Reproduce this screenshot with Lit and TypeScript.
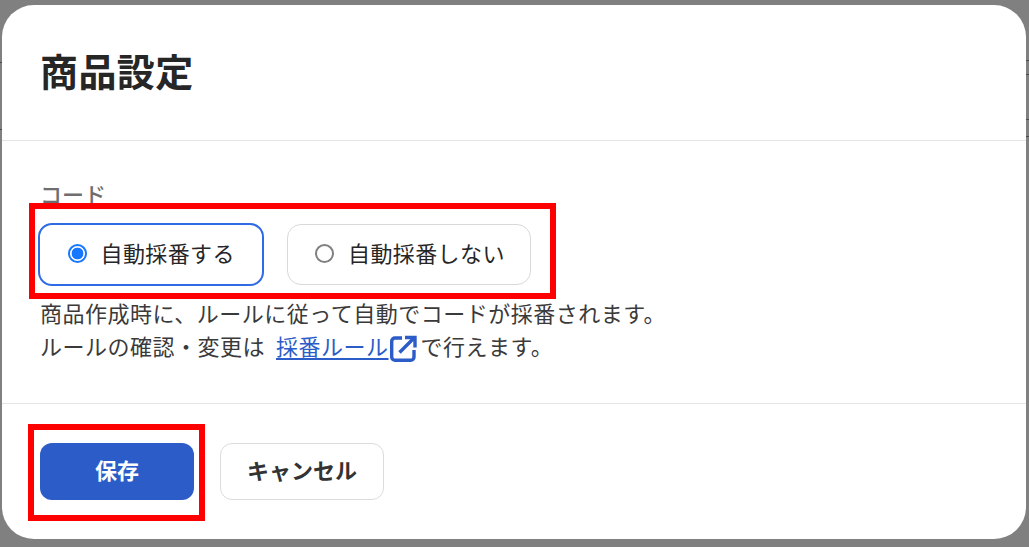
import { LitElement, html, css } from "lit";
import { customElement } from "lit/decorators.js";

@customElement("app-root")
export class AppRoot extends LitElement {
  static styles = css`
    :host {
      display: block;
      width: 1029px;
      height: 547px;
      position: relative;
      overflow: hidden;
      background: #808080;
      font-family: "Noto Sans CJK JP", "Noto Sans", sans-serif;
      box-sizing: border-box;
      padding: 5px 3px 8px 2px;
      color: #262626;
    }
    * { box-sizing: border-box; }
    .bgline { position: absolute; height: 1px; background: #4a4a4a; }
    .modal {
      position: relative;
      height: 534px;
      background: #fff;
      border-radius: 32px;
      display: flex;
      flex-direction: column;
    }
    header {
      height: 136px;
      flex: none;
      display: flex;
      align-items: center;
      padding: 0 39px;
      border-bottom: 1px solid #e4e4e4;
    }
    h1 {
      margin: -5px 0 0 -1px;
      font-size: 38px;
      line-height: 56px;
      font-weight: 700;
      letter-spacing: 0.4px;
      color: #262626;
    }
    main {
      height: 263px;
      flex: none;
      padding: 37px 0 0 36px;
      border-bottom: 1px solid #e4e4e4;
    }
    .label {
      font-size: 22px;
      font-weight: 500;
      line-height: 30px;
      height: 30px;
      color: #6e6e6e;
      padding-left: 2px;
    }
    .chips { display: flex; align-items: center; gap: 23px; margin-top: 15px; }
    .chip {
      display: flex;
      align-items: center;
      border: 1px solid #d9d9d9;
      border-radius: 14px;
      font-size: 22px;
      letter-spacing: 0.4px;
      color: #262626;
      background: #fff;
      height: 61px;
      width: 244px;
      padding-left: 27px;
      gap: 14px;
    }
    .chip.on {
      border: 2.5px solid #2f6be4;
      height: 63px;
      width: 226px;
      padding-left: 27.500px;
    }
    .chip-text { padding-bottom: 6px; }
    .radio {
      width: 19px;
      height: 19px;
      border-radius: 50%;
      border: 2px solid #808080;
      flex: none;
      margin-top: -2px;
    }
    .on .radio {
      border: 2px solid #1677ff;
      background: radial-gradient(circle, #1677ff 0 5.6px, #fff 6.2px);
    }
    .desc {
      margin: 10px 0 0 2px;
      font-size: 22px;
      letter-spacing: 0.5px;
      line-height: 33px;
      color: #3a3a3a;
    }
    .desc a {
      color: #2b5cc8;
      text-decoration: underline;
      text-underline-offset: 3px;
      margin-left: 11px;
    }
    .desc svg { vertical-align: -7px; margin: 0 4px 0 1px; }
    footer {
      flex: 1;
      display: flex;
      align-items: flex-start;
      gap: 26px;
      padding: 39px 0 0 38px;
    }
    button {
      font-family: inherit;
      font-size: 22px;
      font-weight: 700;
      height: 57px;
      border-radius: 12px;
      padding: 0 0 5px;
      line-height: 1;
    }
    .primary { width: 154px; background: #2b5cc8; color: #fff; border: none; }
    .secondary { width: 164px; background: #fff; color: #333; border: 1px solid #dcdcdc; }
    .mark { position: absolute; border: 6px solid #ff0000; pointer-events: none; }
    .mark.a { left: 29px; top: 203px; width: 527px; height: 96px; }
    .mark.b { left: 28px; top: 424px; width: 177px; height: 97px; }
  `;

  render() {
    return html`
      <div class="bgline" style="left:0;top:62px;width:2px"></div>
      <div class="bgline" style="left:0;top:129px;width:2px"></div>
      <div class="bgline" style="left:1026px;top:60px;width:3px"></div>
      <div class="bgline" style="left:1026px;top:74px;width:3px"></div>
      <div class="bgline" style="left:1026px;top:119px;width:3px"></div>
      <div class="bgline" style="left:1026px;top:136px;width:3px"></div>
      <div class="modal">
        <header><h1>商品設定</h1></header>
        <main>
          <div class="label">コード</div>
          <div class="chips">
            <div class="chip on"><span class="radio"></span><span class="chip-text">自動採番する</span></div>
            <div class="chip"><span class="radio"></span><span class="chip-text">自動採番しない</span></div>
          </div>
          <div class="desc">
            商品作成時に、ルールに従って自動でコードが採番されます。<br />
            ルールの確認・変更は<a href="#">採番ルール</a><svg width="27" height="27" viewBox="0 0 27 27" fill="none" stroke="#2b5cc8" stroke-width="3.4"><path d="M12 3H5A3.300 3.300 0 0 0 1.700 6.300V22A3.300 3.300 0 0 0 5 25.300H20.700A3.300 3.300 0 0 0 24 22V15"/><path d="M9.500 17.500L24 3M15 2.500H25V12.500"/></svg>で行えます。
          </div>
        </main>
        <footer>
          <button class="primary">保存</button>
          <button class="secondary">キャンセル</button>
        </footer>
      </div>
      <div class="mark a"></div>
      <div class="mark b"></div>
    `;
  }
}
